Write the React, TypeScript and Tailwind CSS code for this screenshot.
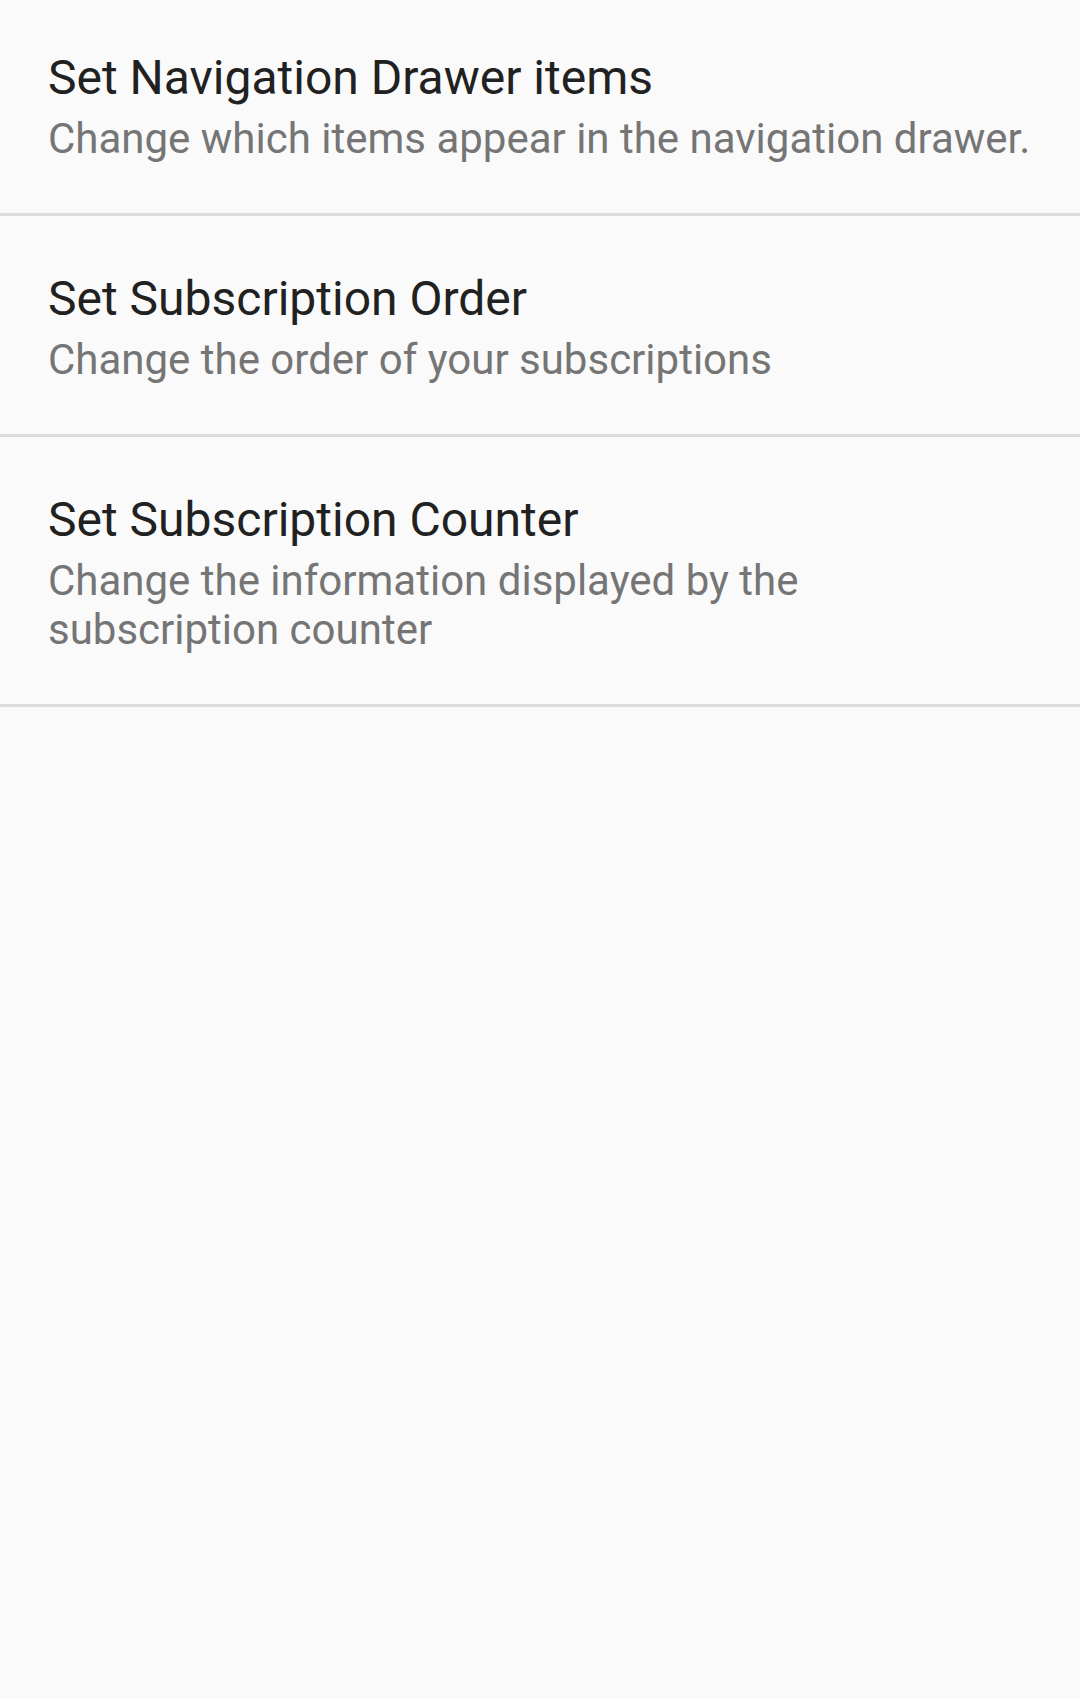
import React from "react";

interface PrefItem {
  id: number;
  title: string;
  summary: string;
}

const items: PrefItem[] = [
  {
    id: 1,
    title: "Set Navigation Drawer items",
    summary: "Change which items appear in the navigation drawer.",
  },
  {
    id: 2,
    title: "Set Subscription Order",
    summary: "Change the order of your subscriptions",
  },
  {
    id: 3,
    title: "Set Subscription Counter",
    summary: "Change the information displayed by the subscription counter",
  },
];

const App: React.FC = () => {
  return (
    <div
      className="min-h-[1699px] w-[1080px] bg-[#fafafa]"
      style={{ fontFamily: "Roboto, 'Noto Sans', sans-serif" }}
    >
      {items.map((item, i) => (
        <div
          key={item.id}
          className={`pl-12 pr-12 pb-[50px] border-b-[3px] border-[#dcdcdc] ${
            i === 0 ? "pt-[50px]" : "pt-[55px]"
          }`}
        >
          <div className="text-[48px] leading-[56px] text-[#212121]">
            {item.title}
          </div>
          <div className="mt-2 text-[42px] leading-[49px] text-[#757575]">
            {item.summary}
          </div>
        </div>
      ))}
    </div>
  );
};

export default App;
